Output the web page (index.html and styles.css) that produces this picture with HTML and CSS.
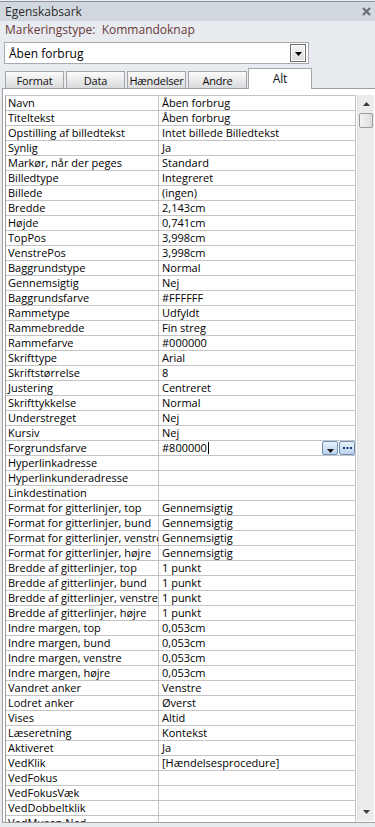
FILE: index.html
```html
<!DOCTYPE html>
<html lang="da">
<head>
  <meta charset="UTF-8" />
  <meta name="viewport" content="width=device-width, initial-scale=1.0"/>
  <title>Egenskabsark</title>
  <link rel="stylesheet" href="styles.css">
</head>
<body>

<div class="sheet">
  <div class="titlebar">
    <span>Egenskabsark</span>
    <svg class="close" width="9" height="9" viewBox="0 0 9 9">
      <path d="M1 1 L8 8 M8 1 L1 8" stroke="#6b6e73" stroke-width="2.2" />
    </svg>
  </div>
  <div class="seltype">Markeringstype:&nbsp; Kommandoknap</div>

  <div class="combo">
    <span>Åben forbrug</span>
    <span class="combo-btn">
      <svg width="7" height="4" viewBox="0 0 7 4"><path d="M0 0 H7 L3.5 4 Z" fill="#000" /></svg>
    </span>
  </div>

  <div class="tabs">
    <div class="tab">Format</div>
    <div class="tab">Data</div>
    <div class="tab">Hændelser</div>
    <div class="tab">Andre</div>
    <div class="tab active">Alt</div>
  </div>

  <div class="panel">
    <div class="grid-wrap">
      <div class="props">
        <div class="row"><div class="name">Navn</div><div class="val">Åben forbrug</div></div>
        <div class="row"><div class="name">Titeltekst</div><div class="val">Åben forbrug</div></div>
        <div class="row"><div class="name">Opstilling af billedtekst</div><div class="val">Intet billede Billedtekst</div></div>
        <div class="row"><div class="name">Synlig</div><div class="val">Ja</div></div>
        <div class="row"><div class="name">Markør, når der peges</div><div class="val">Standard</div></div>
        <div class="row"><div class="name">Billedtype</div><div class="val">Integreret</div></div>
        <div class="row"><div class="name">Billede</div><div class="val">(ingen)</div></div>
        <div class="row"><div class="name">Bredde</div><div class="val">2,143cm</div></div>
        <div class="row"><div class="name">Højde</div><div class="val">0,741cm</div></div>
        <div class="row"><div class="name">TopPos</div><div class="val">3,998cm</div></div>
        <div class="row"><div class="name">VenstrePos</div><div class="val">3,998cm</div></div>
        <div class="row"><div class="name">Baggrundstype</div><div class="val">Normal</div></div>
        <div class="row"><div class="name">Gennemsigtig</div><div class="val">Nej</div></div>
        <div class="row"><div class="name">Baggrundsfarve</div><div class="val">#FFFFFF</div></div>
        <div class="row"><div class="name">Rammetype</div><div class="val">Udfyldt</div></div>
        <div class="row"><div class="name">Rammebredde</div><div class="val">Fin streg</div></div>
        <div class="row"><div class="name">Rammefarve</div><div class="val">#000000</div></div>
        <div class="row"><div class="name">Skrifttype</div><div class="val">Arial</div></div>
        <div class="row"><div class="name">Skriftstørrelse</div><div class="val">8</div></div>
        <div class="row"><div class="name">Justering</div><div class="val">Centreret</div></div>
        <div class="row"><div class="name">Skrifttykkelse</div><div class="val">Normal</div></div>
        <div class="row"><div class="name">Understreget</div><div class="val">Nej</div></div>
        <div class="row"><div class="name">Kursiv</div><div class="val">Nej</div></div>
        <div class="row">
          <div class="name">Forgrundsfarve</div>
          <div class="val editing">
            <span>#800000</span><span class="caret"></span>
            <span class="cell-btns">
              <span class="cell-btn">
                <svg width="7" height="4" viewBox="0 0 7 4"><path d="M0 0 H7 L3.5 4 Z" fill="#1b1b1b" /></svg>
              </span>
              <span class="cell-btn dots">
                <svg width="9" height="2" viewBox="0 0 9 2"><rect x="0" y="0" width="2" height="2" fill="#1e3a6a"/><rect x="3.5" y="0" width="2" height="2" fill="#1e3a6a"/><rect x="7" y="0" width="2" height="2" fill="#1e3a6a"/></svg>
              </span>
            </span>
          </div>
        </div>
        <div class="row"><div class="name">Hyperlinkadresse</div><div class="val"></div></div>
        <div class="row"><div class="name">Hyperlinkunderadresse</div><div class="val"></div></div>
        <div class="row"><div class="name">Linkdestination</div><div class="val"></div></div>
        <div class="row"><div class="name">Format for gitterlinjer, top</div><div class="val">Gennemsigtig</div></div>
        <div class="row"><div class="name">Format for gitterlinjer, bund</div><div class="val">Gennemsigtig</div></div>
        <div class="row"><div class="name">Format for gitterlinjer, venstre</div><div class="val">Gennemsigtig</div></div>
        <div class="row"><div class="name">Format for gitterlinjer, højre</div><div class="val">Gennemsigtig</div></div>
        <div class="row"><div class="name">Bredde af gitterlinjer, top</div><div class="val">1 punkt</div></div>
        <div class="row"><div class="name">Bredde af gitterlinjer, bund</div><div class="val">1 punkt</div></div>
        <div class="row"><div class="name">Bredde af gitterlinjer, venstre</div><div class="val">1 punkt</div></div>
        <div class="row"><div class="name">Bredde af gitterlinjer, højre</div><div class="val">1 punkt</div></div>
        <div class="row"><div class="name">Indre margen, top</div><div class="val">0,053cm</div></div>
        <div class="row"><div class="name">Indre margen, bund</div><div class="val">0,053cm</div></div>
        <div class="row"><div class="name">Indre margen, venstre</div><div class="val">0,053cm</div></div>
        <div class="row"><div class="name">Indre margen, højre</div><div class="val">0,053cm</div></div>
        <div class="row"><div class="name">Vandret anker</div><div class="val">Venstre</div></div>
        <div class="row"><div class="name">Lodret anker</div><div class="val">Øverst</div></div>
        <div class="row"><div class="name">Vises</div><div class="val">Altid</div></div>
        <div class="row"><div class="name">Læseretning</div><div class="val">Kontekst</div></div>
        <div class="row"><div class="name">Aktiveret</div><div class="val">Ja</div></div>
        <div class="row"><div class="name">VedKlik</div><div class="val">[Hændelsesprocedure]</div></div>
        <div class="row"><div class="name">VedFokus</div><div class="val"></div></div>
        <div class="row"><div class="name">VedFokusVæk</div><div class="val"></div></div>
        <div class="row"><div class="name">VedDobbeltklik</div><div class="val"></div></div>
        <div class="row"><div class="name">VedMusen Ned</div><div class="val"></div></div>
      </div>

      <div class="scrollbar">
        <svg class="arrow" width="7" height="4" viewBox="0 0 7 4"><path d="M0 4 H7 L3.5 0 Z" fill="#3c3c3c" /></svg>
        <div class="thumb"></div>
        <div class="track"></div>
        <svg class="arrow" width="7" height="4" viewBox="0 0 7 4"><path d="M0 0 H7 L3.5 4 Z" fill="#3c3c3c" /></svg>
      </div>
    </div>
  </div>
</div>

</body>
</html>
```

FILE: styles.css
```css
body {
  margin: 0;
  padding-top: 1px;
  background: #e8ebf0;
  font-family: "Open Sans", Arial, sans-serif;
  font-size: 11px;
  color: #000;
}

.sheet {
  height: 826px;
  border-top: 1px solid #8e9197;
  box-sizing: border-box;
}

.titlebar {
  height: 19px;
  background: #d2d8e0;
  display: flex;
  align-items: center;
  justify-content: space-between;
  padding: 0 4px 0 5px;
  font-size: 12px;
  color: #2c2c2c;
}

.seltype {
  height: 17px;
  line-height: 17px;
  padding-left: 5px;
  font-size: 12px;
  color: #6a3a3a;
}

.combo {
  margin: 4px 0 0 4px;
  width: 305px;
  height: 22px;
  box-sizing: border-box;
  border: 1px solid #a9abae;
  background: #fff;
  display: flex;
  align-items: center;
  justify-content: space-between;
  padding: 0 2px 0 4px;
  font-size: 12px;
}

.combo-btn {
  width: 16px;
  height: 18px;
  box-sizing: border-box;
  border: 1px solid #6d6d6d;
  background: linear-gradient(#f6f6f6, #dcdcdc);
  box-shadow: inset 0 0 0 1px #fff;
  display: flex;
  align-items: center;
  justify-content: center;
  padding-top: 1px;
}

.tabs {
  margin-top: 4px;
  height: 20px;
  display: flex;
  align-items: flex-end;
  gap: 2px;
  padding-left: 5px;
  position: relative;
  z-index: 1;
}

.tab {
  width: 59px;
  height: 17px;
  box-sizing: border-box;
  border: 1px solid #a3a5a8;
  border-bottom: none;
  background: linear-gradient(#fbfbfb, #d9dadc);
  text-align: center;
  line-height: 17px;
  font-size: 11px;
  letter-spacing: -0.2px;
  color: #111;
  white-space: nowrap;
}

.tab.active {
  width: 64px;
  height: 21px;
  margin-left: -1px;
  margin-bottom: -1px;
  background: #fff;
  line-height: 19px;
  font-size: 12px;
}

.panel {
  margin-left: 2px;
  height: 735px;
  box-sizing: border-box;
  border: 1px solid #9d9fa3;
  border-right: none;
  background: #fff;
  padding: 6px 0 0 2px;
}

.grid-wrap {
  display: flex;
  gap: 1px;
  height: 727px;
}

.props {
  width: 351px;
  height: 727px;
  overflow: hidden;
  box-sizing: border-box;
  border-top: 1px solid #c4c4c4;
  border-left: 1px solid #9e9e9e;
}

.row {
  display: grid;
  grid-template-columns: 153px 197px;
  height: 15px;
}

.name, .val {
  box-sizing: border-box;
  border-right: 1px solid #c4c4c4;
  border-bottom: 1px solid #c4c4c4;
  padding-left: 2px;
  line-height: 14px;
  white-space: nowrap;
  overflow: hidden;
}

.val {
  padding-left: 3px;
}

.val.editing {
  display: flex;
  align-items: center;
}

.caret {
  width: 1px;
  height: 12px;
  background: #000;
  margin-left: 1px;
}

.cell-btns {
  margin-left: auto;
  display: flex;
  gap: 1px;
  height: 14px;
}

.cell-btn {
  width: 16px;
  height: 14px;
  box-sizing: border-box;
  border: 1px solid #6f8fba;
  border-radius: 2px;
  background: linear-gradient(#e6f0fa, #bcd3ec);
  display: flex;
  align-items: flex-end;
  justify-content: center;
  padding-bottom: 1px;
}

.cell-btn.dots {
  align-items: center;
  padding-bottom: 0;
}

.scrollbar {
  width: 17px;
  height: 726px;
  box-sizing: border-box;
  background: #ececec;
  border-left: 1px solid #e2e2e2;
  display: flex;
  flex-direction: column;
  align-items: center;
  padding: 7px 0 7px;
}

.thumb {
  margin-top: 7px;
  width: 14px;
  height: 15px;
  box-sizing: border-box;
  border: 1px solid #9a9a9a;
  border-radius: 2px;
  background: linear-gradient(90deg, #f4f4f4, #dcdcdc);
}

.track {
  flex: 1;
}
```
